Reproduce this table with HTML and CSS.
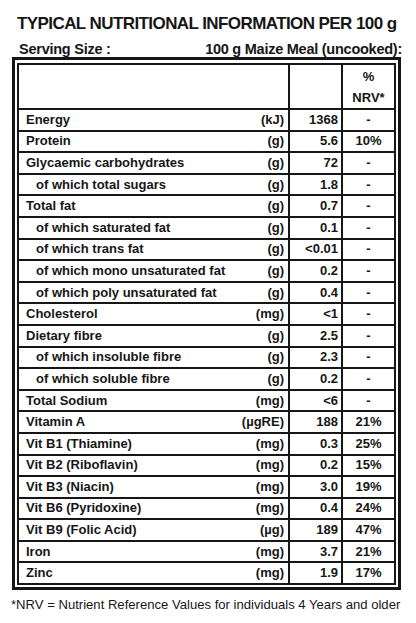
FILE: index.html
```html
<!DOCTYPE html>
<html>
<head>
<meta charset="utf-8">
<link rel="stylesheet" href="styles.css">
</head>
<body>
<div class="label">
  <h1 class="title">TYPICAL NUTRITIONAL INFORMATION PER 100 g</h1>
  <div class="serving"><span>Serving Size :</span><span>100 g Maize Meal (uncooked):</span></div>
  <div class="frame">
    <table class="facts">
      <colgroup><col class="c-name"><col class="c-val"><col class="c-nrv"></colgroup>
      <thead>
        <tr class="head"><th></th><th></th><th class="nrv">%<br>NRV*</th></tr>
      </thead>
      <tbody>
        <tr><td><div class="nm"><span>Energy</span><span>(kJ)</span></div></td><td class="v">1368</td><td class="n">-</td></tr>
        <tr><td><div class="nm"><span>Protein</span><span>(g)</span></div></td><td class="v">5.6</td><td class="n">10%</td></tr>
        <tr><td><div class="nm"><span>Glycaemic carbohydrates</span><span>(g)</span></div></td><td class="v">72</td><td class="n">-</td></tr>
        <tr><td><div class="nm sub"><span>of which total sugars</span><span>(g)</span></div></td><td class="v">1.8</td><td class="n">-</td></tr>
        <tr><td><div class="nm"><span>Total fat</span><span>(g)</span></div></td><td class="v">0.7</td><td class="n">-</td></tr>
        <tr><td><div class="nm sub"><span>of which saturated fat</span><span>(g)</span></div></td><td class="v">0.1</td><td class="n">-</td></tr>
        <tr><td><div class="nm sub"><span>of which trans fat</span><span>(g)</span></div></td><td class="v">&lt;0.01</td><td class="n">-</td></tr>
        <tr><td><div class="nm sub"><span>of which mono unsaturated fat</span><span>(g)</span></div></td><td class="v">0.2</td><td class="n">-</td></tr>
        <tr><td><div class="nm sub"><span>of which poly unsaturated fat</span><span>(g)</span></div></td><td class="v">0.4</td><td class="n">-</td></tr>
        <tr><td><div class="nm"><span>Cholesterol</span><span>(mg)</span></div></td><td class="v">&lt;1</td><td class="n">-</td></tr>
        <tr><td><div class="nm"><span>Dietary fibre</span><span>(g)</span></div></td><td class="v">2.5</td><td class="n">-</td></tr>
        <tr><td><div class="nm sub"><span>of which insoluble fibre</span><span>(g)</span></div></td><td class="v">2.3</td><td class="n">-</td></tr>
        <tr><td><div class="nm sub"><span>of which soluble fibre</span><span>(g)</span></div></td><td class="v">0.2</td><td class="n">-</td></tr>
        <tr><td><div class="nm"><span>Total Sodium</span><span>(mg)</span></div></td><td class="v">&lt;6</td><td class="n">-</td></tr>
        <tr><td><div class="nm"><span>Vitamin A</span><span>(µgRE)</span></div></td><td class="v">188</td><td class="n">21%</td></tr>
        <tr><td><div class="nm"><span>Vit B1 (Thiamine)</span><span>(mg)</span></div></td><td class="v">0.3</td><td class="n">25%</td></tr>
        <tr><td><div class="nm"><span>Vit B2 (Riboflavin)</span><span>(mg)</span></div></td><td class="v">0.2</td><td class="n">15%</td></tr>
        <tr><td><div class="nm"><span>Vit B3 (Niacin)</span><span>(mg)</span></div></td><td class="v">3.0</td><td class="n">19%</td></tr>
        <tr><td><div class="nm"><span>Vit B6 (Pyridoxine)</span><span>(mg)</span></div></td><td class="v">0.4</td><td class="n">24%</td></tr>
        <tr><td><div class="nm"><span>Vit B9 (Folic Acid)</span><span>(µg)</span></div></td><td class="v">189</td><td class="n">47%</td></tr>
        <tr><td><div class="nm"><span>Iron</span><span>(mg)</span></div></td><td class="v">3.7</td><td class="n">21%</td></tr>
        <tr><td><div class="nm"><span>Zinc</span><span>(mg)</span></div></td><td class="v">1.9</td><td class="n">17%</td></tr>
      </tbody>
    </table>
  </div>
  <p class="foot">*NRV = Nutrient Reference Values for individuals 4 Years and older</p>
</div>
</body>
</html>
```
FILE: styles.css
```css
html, body {
  margin: 0;
  padding: 0;
  background: #fff;
}
body {
  font-family: "Liberation Sans", Arial, sans-serif;
  color: #161616;
}
.label {
  width: 416px;
  padding-top: 14px;
}
.title {
  margin: 0 0 0 17px;
  font-size: 17px;
  font-weight: bold;
  letter-spacing: -0.58px;
  line-height: 20px;
  white-space: nowrap;
}
.serving {
  display: flex;
  justify-content: space-between;
  margin: 7px 14px 0 19px;
  font-size: 14.5px;
  font-weight: bold;
  line-height: 16px;
  letter-spacing: -0.25px;
}
.frame {
  margin: 0 15px 0 12px;
  border: 3px solid #161616;
  padding: 3px 2px 2px 2px;
}
.facts {
  width: 100%;
  border-collapse: collapse;
  border: 2px solid #161616;
  table-layout: fixed;
  font-size: 13px;
  font-weight: bold;
}
.c-name { width: 271px; }
.c-val { width: 53px; }
.facts th, .facts td {
  border: 2px solid #161616;
  padding: 0;
}
.head th {
  height: 39px;
  font-weight: bold;
}
.nrv {
  font-size: 13px;
  line-height: 21px;
  text-align: center;
  vertical-align: top;
  padding-top: 1px !important;
}
.facts td {
  height: 19.6px;
  line-height: 18px;
}
.nm {
  display: flex;
  justify-content: space-between;
  padding: 0 4px 0 7px;
}
.nm.sub {
  padding-left: 17px;
}
.v {
  text-align: right;
  padding-right: 3px !important;
}
.n {
  text-align: center;
}
.foot {
  margin: 7px 0 0 11px;
  font-size: 13.1px;
  font-weight: normal;
  white-space: nowrap;
}
```
